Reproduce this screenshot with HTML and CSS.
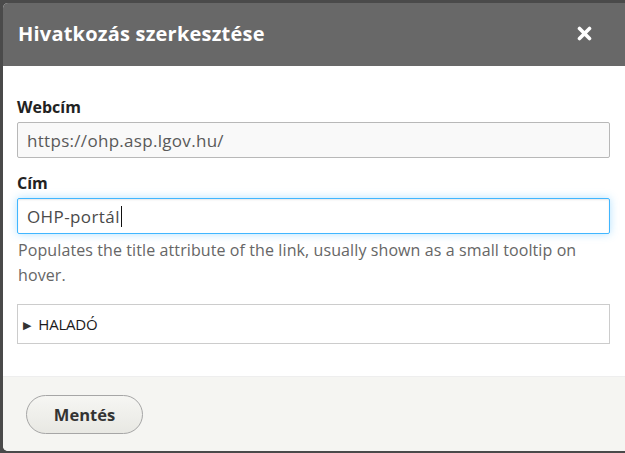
FILE: index.html
```html
<!DOCTYPE html>
<html lang="hu">
<head>
<meta charset="utf-8">
<title>Hivatkozás szerkesztése</title>
<link rel="stylesheet" href="styles.css">
</head>
<body>
<div class="dialog">
  <div class="titlebar">
    <span class="title">Hivatkozás szerkesztése</span>
    <button class="close" aria-label="Close">
      <svg width="15" height="15" viewBox="0 0 15 15"><path d="M2.5 2.5 L12.5 12.5 M12.5 2.5 L2.5 12.5" stroke="#fff" stroke-width="3.6" stroke-linecap="round"/></svg>
    </button>
  </div>
  <div class="content">
    <div class="field">
      <label class="label">Webcím</label>
      <div class="input disabled">https://ohp.asp.lgov.hu/</div>
    </div>
    <div class="field">
      <label class="label">Cím</label>
      <div class="input focus">OHP-portál<span class="caret"></span></div>
      <div class="desc">Populates the title attribute of the link, usually shown as a small tooltip on hover.</div>
    </div>
    <div class="details"><span class="tri">▶</span>HALADÓ</div>
  </div>
  <div class="footer">
    <button class="btn">Mentés</button>
  </div>
</div>
</body>
</html>
```
FILE: styles.css
```css
html, body { margin: 0; padding: 0; }
body {
  background: #4a4a4a;
  font-family: "Open Sans", "DejaVu Sans", sans-serif;
  overflow: hidden;
}
.dialog {
  margin: 3px 0 0 3px;
  width: 640px;
  height: 448px;
  background: #fff;
  border-radius: 5px;
  overflow: hidden;
  display: flex;
  flex-direction: column;
}
.titlebar {
  height: 63px;
  background: #686868;
  display: flex;
  align-items: center;
  padding: 0 15px;
  box-sizing: border-box;
  width: 622px;
}
.title {
  color: #fff;
  font-weight: 700;
  font-size: 20px;
  letter-spacing: 0.2px;
  flex: 1;
  margin-top: -2px;
}
.close {
  background: none;
  border: 0;
  padding: 0;
  margin: 0 18px 3px 0;
  width: 15px;
  height: 15px;
  display: flex;
}
.content {
  padding: 30px 15px 32px 14px;
  width: 622px;
  box-sizing: border-box;
}
.field { margin-bottom: 14px; }
.label {
  display: block;
  font-weight: 700;
  font-size: 16px;
  line-height: 22px;
  color: #222;
  margin-bottom: 4px;
}
.input {
  height: 36px;
  box-sizing: border-box;
  border: 1px solid #b8b8b8;
  border-radius: 2px;
  padding: 0 9px;
  display: flex;
  align-items: center;
  font-size: 17px;
  color: #555;
}
.input.disabled { background: #f9f9f9; color: #5a5a5a; letter-spacing: 0.3px; }
.input.focus {
  border-color: #40b6ff;
  box-shadow: inset 0 1px 2px rgba(0,0,0,0.1), 0 0 8px #40b6ff66;
  color: #4a4a4a;
  letter-spacing: 0.4px;
}
.caret {
  display: inline-block;
  width: 1px;
  height: 21px;
  background: #111;
  margin-left: 1px;
}
.desc {
  font-size: 16px;
  line-height: 25px;
  color: #666;
  margin-top: 4px;
  padding-left: 1px;
  letter-spacing: 0.1px;
}
.details {
  margin-top: 16px;
  height: 40px;
  box-sizing: border-box;
  border: 1px solid #ccc;
  display: flex;
  align-items: center;
  padding-left: 5px;
  font-size: 15px;
  letter-spacing: -0.2px;
  color: #1a1a1a;
}
.tri { font-size: 11px; margin-right: 7px; color: #333; }
.footer {
  flex: 1;
  background: #f5f5f2;
  border-top: 1px solid #eee;
  padding: 18px 0 0 23px;
  width: 622px;
  box-sizing: border-box;
}
.btn {
  font-family: inherit;
  width: 117px;
  height: 39px;
  border: 1px solid #a6a6a6;
  border-radius: 20px;
  background: linear-gradient(#f6f6f3, #e8e8e3);
  font-weight: 700;
  font-size: 16.5px;
  color: #333;
}
```
